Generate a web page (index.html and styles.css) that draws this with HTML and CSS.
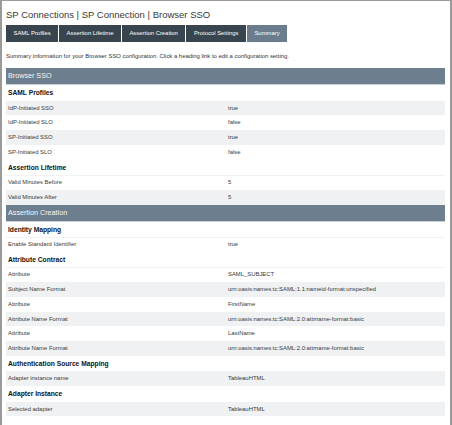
FILE: index.html
```html
<!DOCTYPE html>
<html>
<head>
<meta charset="utf-8">
<link rel="stylesheet" href="styles.css">
</head>
<body>
<div class="frame">
  <h1 class="title">SP Connections | SP Connection | Browser SSO</h1>
  <div class="tabs">
    <div class="tab">SAML Profiles</div>
    <div class="tab">Assertion Lifetime</div>
    <div class="tab">Assertion Creation</div>
    <div class="tab">Protocol Settings</div>
    <div class="tab active">Summary</div>
  </div>
  <p class="desc">Summary information for your Browser SSO configuration. Click a heading link to edit a configuration setting.</p>
  <div class="summary">
    <div class="bar">Browser SSO</div>
    <div class="sub">SAML Profiles</div>
    <div class="row alt"><span class="k">IdP-Initiated SSO</span><span class="v">true</span></div>
    <div class="row"><span class="k">IdP-Initiated SLO</span><span class="v">false</span></div>
    <div class="row alt"><span class="k">SP-Initiated SSO</span><span class="v">true</span></div>
    <div class="row"><span class="k">SP-Initiated SLO</span><span class="v">false</span></div>
    <div class="sub">Assertion Lifetime</div>
    <div class="row line"><span class="k">Valid Minutes Before</span><span class="v">5</span></div>
    <div class="row alt"><span class="k">Valid Minutes After</span><span class="v">5</span></div>
    <div class="bar">Assertion Creation</div>
    <div class="sub">Identity Mapping</div>
    <div class="row line"><span class="k">Enable Standard Identifier</span><span class="v">true</span></div>
    <div class="sub">Attribute Contract</div>
    <div class="row line"><span class="k">Attribute</span><span class="v">SAML_SUBJECT</span></div>
    <div class="row alt"><span class="k">Subject Name Format</span><span class="v">urn:oasis:names:tc:SAML:1.1:nameid-format:unspecified</span></div>
    <div class="row"><span class="k">Attribute</span><span class="v">FirstName</span></div>
    <div class="row alt"><span class="k">Attribute Name Format</span><span class="v">urn:oasis:names:tc:SAML:2.0:attrname-format:basic</span></div>
    <div class="row"><span class="k">Attribute</span><span class="v">LastName</span></div>
    <div class="row alt"><span class="k">Attribute Name Format</span><span class="v">urn:oasis:names:tc:SAML:2.0:attrname-format:basic</span></div>
    <div class="sub">Authentication Source Mapping</div>
    <div class="row alt"><span class="k">Adapter instance name</span><span class="v">TableauHTML</span></div>
    <div class="sub">Adapter Instance</div>
    <div class="row alt"><span class="k">Selected adapter</span><span class="v">TableauHTML</span></div>
  </div>
</div>
</body>
</html>
```
FILE: styles.css
```css
html, body {
  margin: 0;
  padding: 0;
  background: #fff;
}
body {
  font-family: "Liberation Sans", Arial, sans-serif;
  color: #333;
}
.frame {
  box-sizing: border-box;
  width: 452px;
  height: 425px;
  border-top: 1px solid #9a9a9a;
  border-left: 2px solid #9a9a9a;
  border-right: 2px solid #9a9a9a;
  padding: 0 5px 0 4px;
  overflow: hidden;
}
.title {
  margin: 0;
  padding-top: 7px;
  height: 17px;
  font-size: 9.5px;
  line-height: 13px;
  font-weight: normal;
  color: #3a3a3a;
}
.tabs {
  display: flex;
  gap: 1px;
  height: 17px;
}
.tab {
  background: #39454e;
  color: #fff;
  font-size: 5.9px;
  line-height: 17px;
  padding: 0 7.5px;
  white-space: nowrap;
}
.tab.active {
  background: #6b7c8c;
}
.desc {
  margin: 9px 0 0;
  font-size: 5.9px;
  line-height: 10px;
  height: 17px;
  color: #333;
}
.summary {
  display: flex;
  flex-direction: column;
}
.bar {
  background: #6d7e8f;
  color: #f4f6f8;
  font-size: 7.2px;
  line-height: 16px;
  height: 16px;
  padding-left: 2px;
  border-bottom: 1px solid #c9d0d6;
}
.sub {
  font-size: 6.7px;
  font-weight: bold;
  color: #111;
  height: 15.5px;
  line-height: 16px;
  padding-left: 2px;
}
.row {
  display: grid;
  grid-template-columns: 220px 1fr;
  height: 14.75px;
  line-height: 14.75px;
  font-size: 5.9px;
  color: #3a3a3a;
  padding-left: 2px;
  box-sizing: border-box;
}
.row.alt {
  background: #f0f1f3;
}
.row.line {
  border-top: 1px solid #f1f2f4;
  line-height: 13.75px;
}
```
